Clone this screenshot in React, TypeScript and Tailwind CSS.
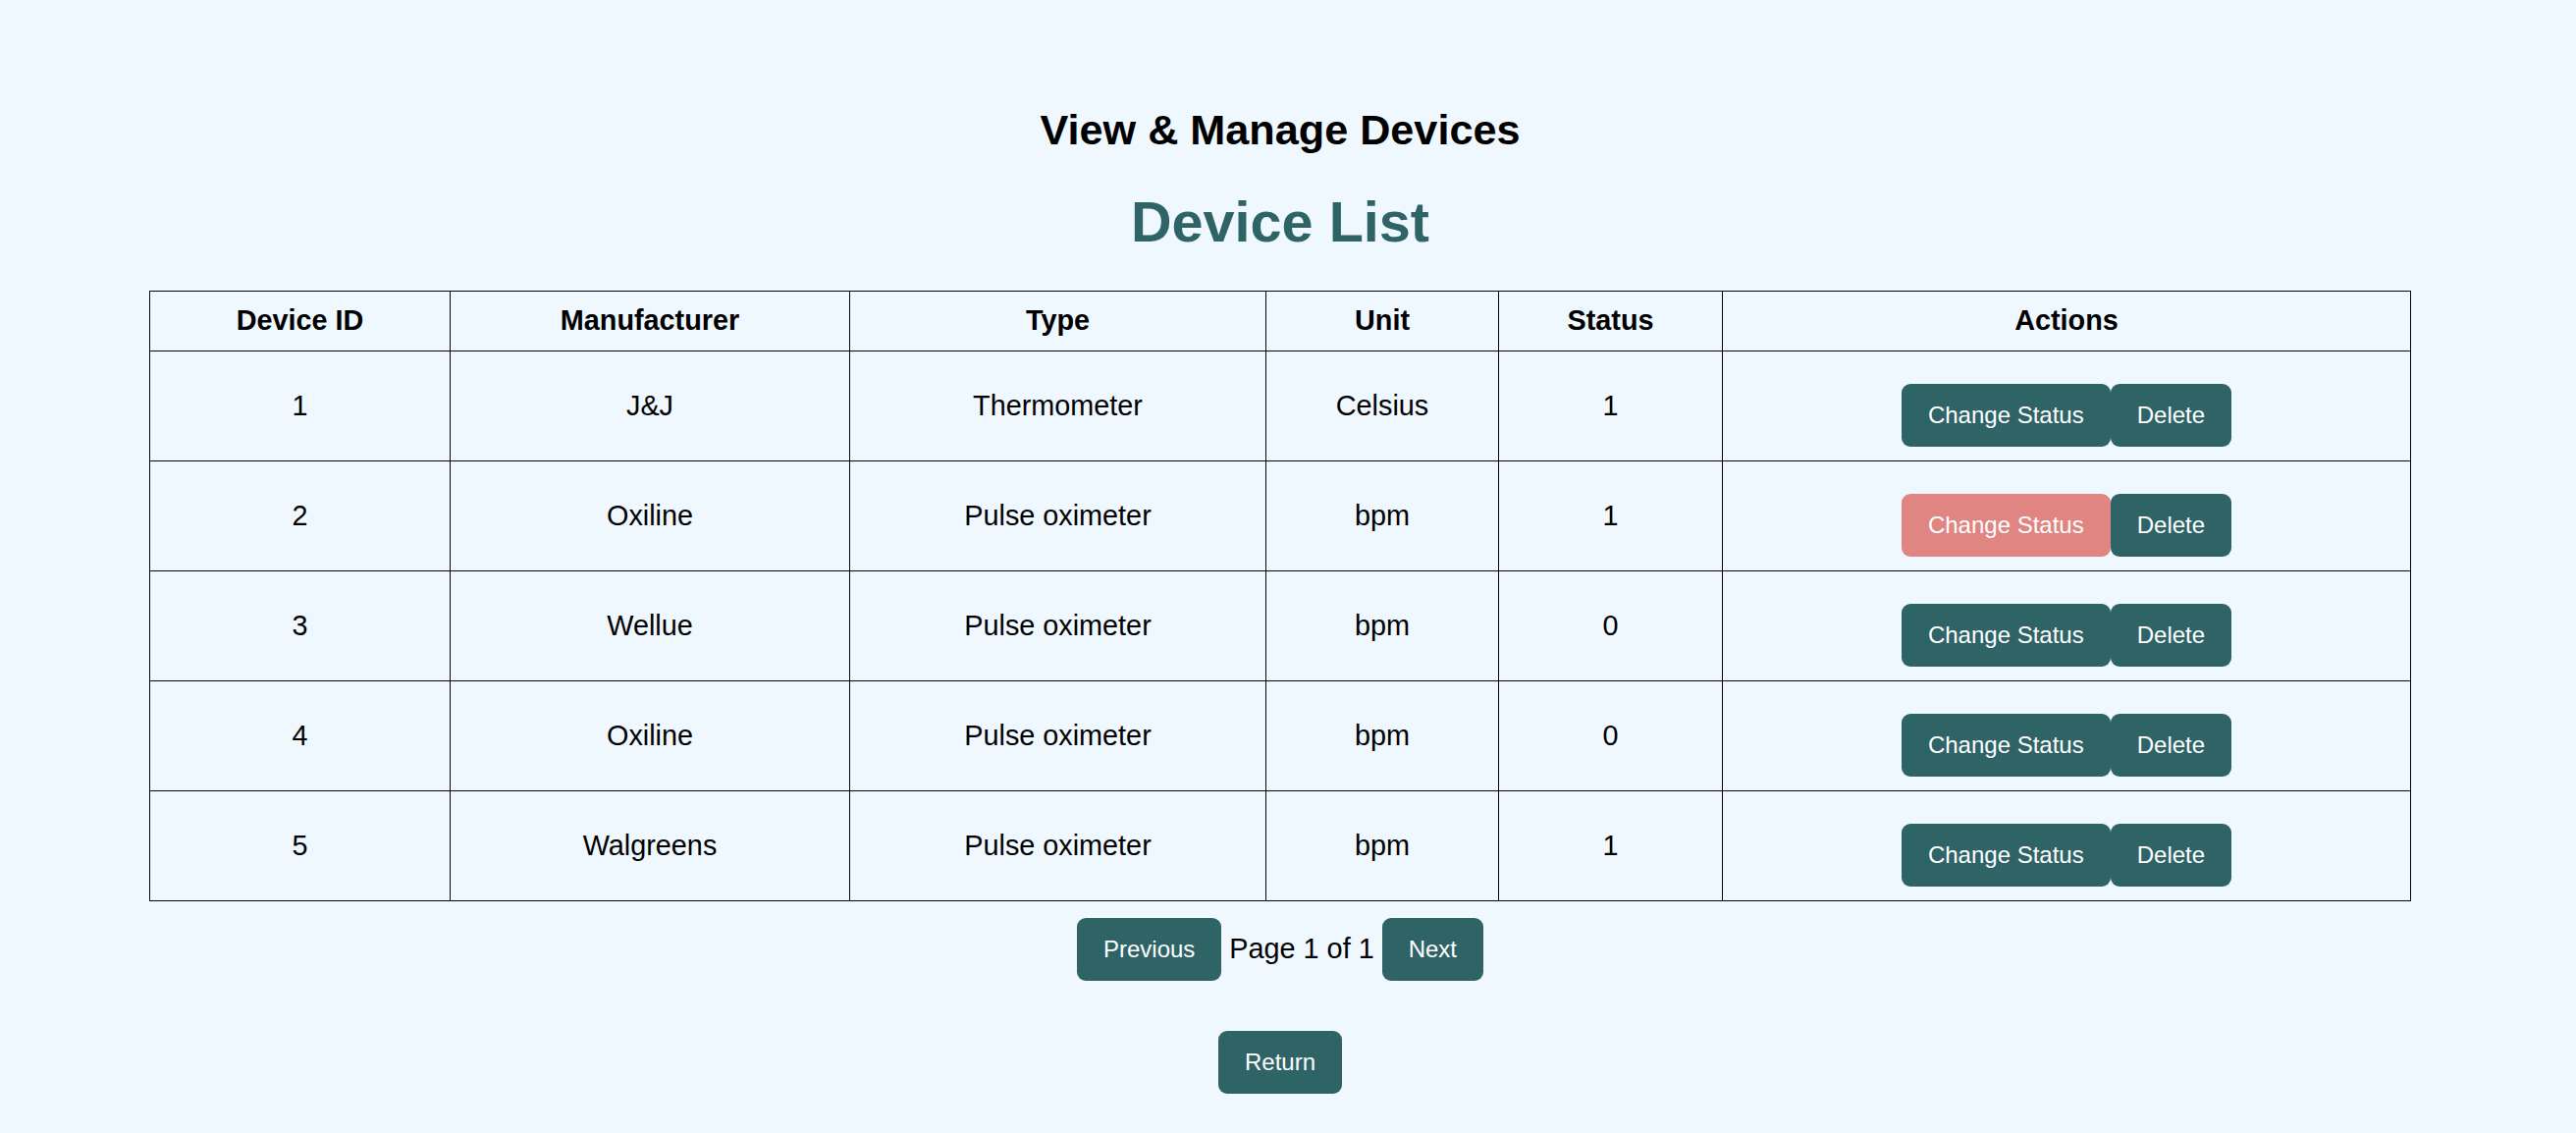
const devices = [
  { id: 1, manufacturer: "J&J", type: "Thermometer", unit: "Celsius", status: 1 },
  { id: 2, manufacturer: "Oxiline", type: "Pulse oximeter", unit: "bpm", status: 1 },
  { id: 3, manufacturer: "Wellue", type: "Pulse oximeter", unit: "bpm", status: 0 },
  { id: 4, manufacturer: "Oxiline", type: "Pulse oximeter", unit: "bpm", status: 0 },
  { id: 5, manufacturer: "Walgreens", type: "Pulse oximeter", unit: "bpm", status: 1 },
];

const btn = "h-[64px] px-[27px] rounded-[9px] text-[24px] text-white bg-[#2f6467] leading-none";

export default function App() {
  return (
    <div className="min-h-screen bg-[#f0f8ff] pr-[16px] pt-[107px] pb-[41px] text-center text-black font-['Liberation_Sans',Arial,sans-serif]">
      <h2 className="text-[43.2px] leading-[50px] font-bold">View &amp; Manage Devices</h2>
      <h1 className="mt-[36px] text-[57.6px] leading-[66px] font-bold text-[#2f6467]">Device List</h1>

      <table className="mt-[37px] mx-auto w-[2304px] border-collapse text-[28.8px]">
        <thead>
          <tr>
            <th className="w-[306px] h-[61px] border border-black font-bold">Device ID</th>
            <th className="w-[407px] border border-black font-bold">Manufacturer</th>
            <th className="w-[424px] border border-black font-bold">Type</th>
            <th className="w-[237px] border border-black font-bold">Unit</th>
            <th className="w-[228px] border border-black font-bold">Status</th>
            <th className="w-[701px] border border-black font-bold">Actions</th>
          </tr>
        </thead>
        <tbody>
          {devices.map((d) => (
            <tr key={d.id}>
              <td className="h-[112px] border border-black align-middle">{d.id}</td>
              <td className="border border-black">{d.manufacturer}</td>
              <td className="border border-black">{d.type}</td>
              <td className="border border-black">{d.unit}</td>
              <td className="border border-black">{d.status}</td>
              <td className="border border-black align-middle">
                <div className="flex justify-center pt-[19px]">
                  <button className={d.id === 2 ? "h-[64px] px-[27px] rounded-[9px] text-[24px] text-white bg-[#e08581] leading-none" : btn}>
                    Change Status
                  </button>
                  <button className={btn}>Delete</button>
                </div>
              </td>
            </tr>
          ))}
        </tbody>
      </table>

      <div className="mt-[17px] flex justify-center items-center gap-[8px] text-[28.8px]">
        <button className={btn}>Previous</button>
        <span>Page 1 of 1</span>
        <button className={btn}>Next</button>
      </div>

      <div className="mt-[51px] flex justify-center">
        <button className={btn}>Return</button>
      </div>
    </div>
  );
}
